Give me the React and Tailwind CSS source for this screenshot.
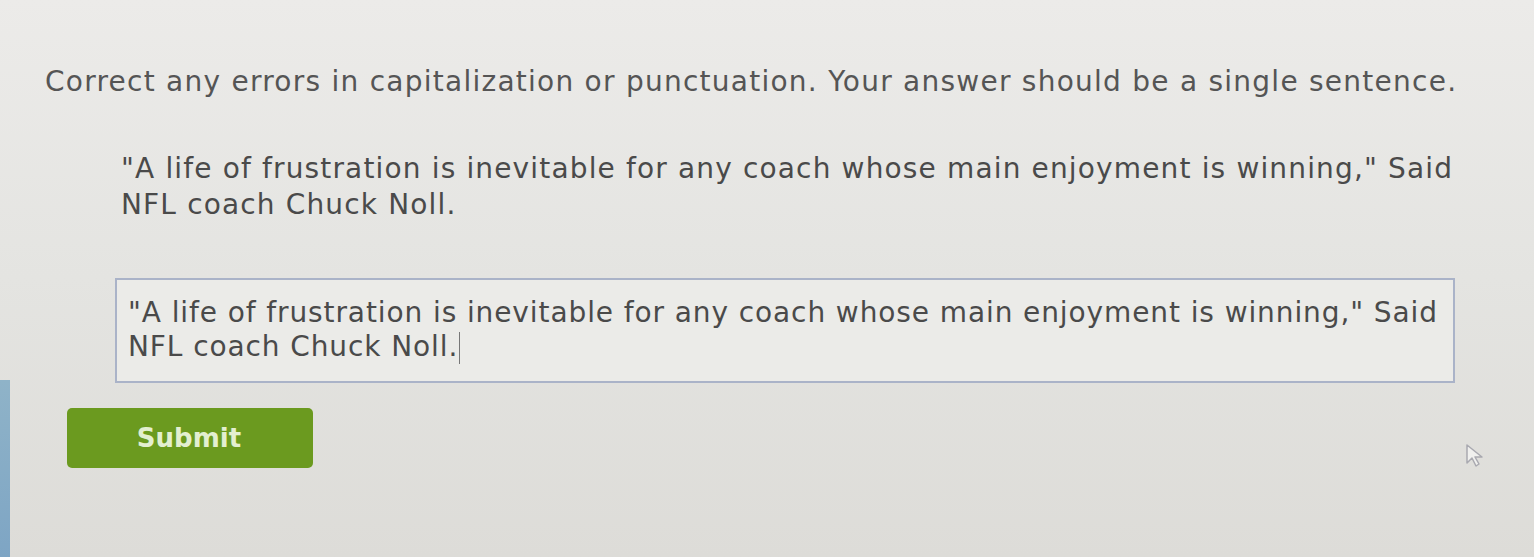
export default function App() {
  const font = { fontFamily: '"DejaVu Sans", Verdana, sans-serif' };
  return (
    <div className="relative w-[1534px] h-[557px] overflow-hidden bg-gradient-to-b from-[#ecebe9] via-[#e4e4e1] to-[#dddcd8] text-[#4e4e4e]" style={font}>
      <div className="absolute left-0 top-[380px] w-[10px] h-[177px] bg-gradient-to-b from-[#8fb3c8] to-[#7ea5c4]" />
      <div className="pl-[45px] pt-[62px] pr-[40px]">
        <p className="text-[28px] leading-[40px] tracking-[1.25px] text-[#555] whitespace-nowrap">
          Correct any errors in capitalization or punctuation. Your answer should be a single sentence.
        </p>
        <div className="pl-[76px] pt-[49px]">
          <p className="text-[28px] leading-[36px] tracking-[1.15px] text-[#4a4a4a] whitespace-nowrap">
            "A life of frustration is inevitable for any coach whose main enjoyment is winning," Said
            <br />
            NFL coach Chuck Noll.
          </p>
        </div>
        <div className="ml-[70px] mt-[55px] w-[1340px] h-[105px] border-2 border-[#aab3c8] bg-[#ebebe8] px-[11px] pt-[16px]">
          <p className="text-[28px] leading-[34px] tracking-[0.9px] text-[#4a4a4a] whitespace-nowrap">
            "A life of frustration is inevitable for any coach whose main enjoyment is winning," Said
            <br />
            NFL coach Chuck Noll.
            <span className="inline-block w-[1px] h-[32px] bg-[#777] align-middle ml-[1px]" />
          </p>
        </div>
        <button className="ml-[22px] mt-[25px] w-[246px] h-[60px] rounded-[5px] bg-[#6b9a1f] text-[#e3efd0] text-[26px] font-bold flex items-center justify-center">
          <span className="-ml-[2px]">Submit</span>
        </button>
      </div>
      <svg className="absolute left-[1465px] top-[443px]" width="22" height="26" viewBox="0 0 22 26">
        <path d="M2 2 L2 20 L7 15 L11 23 L14 21 L10 14 L17 14 Z" fill="#f0f0ee" stroke="#a9a9b0" strokeWidth="1.5" strokeLinejoin="round" />
      </svg>
    </div>
  );
}
